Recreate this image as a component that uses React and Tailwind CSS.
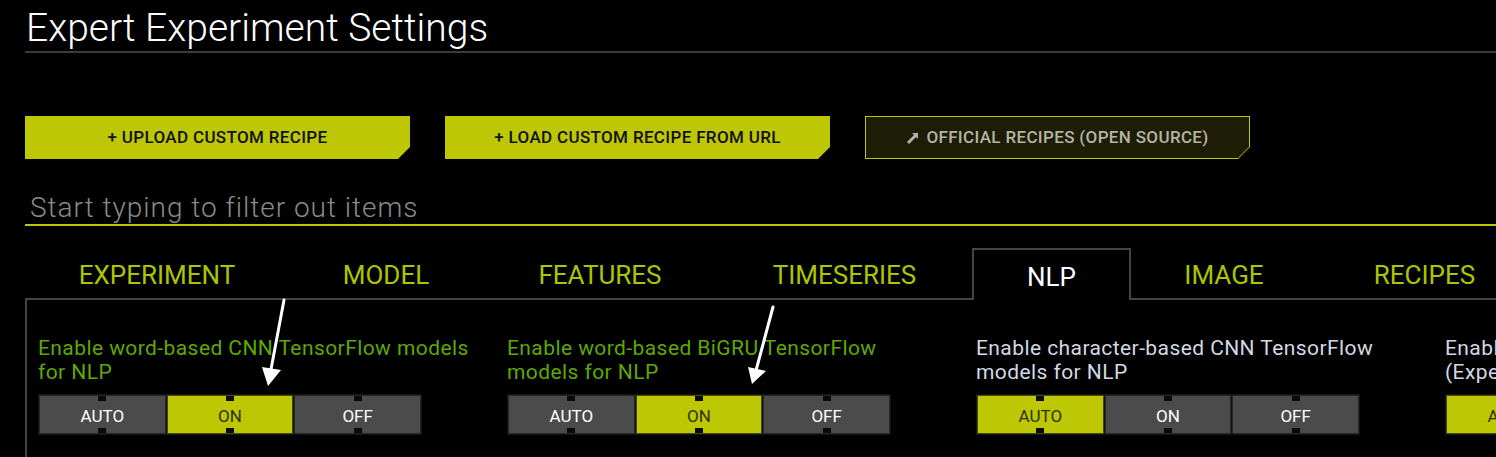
import React from 'react'

const tabs = [
  { name: 'EXPERIMENT', w: 'w-[264px]' },
  { name: 'MODEL', w: 'w-[194px]' },
  { name: 'FEATURES', w: 'w-[234px]' },
  { name: 'TIMESERIES', w: 'w-[255px]' },
  { name: 'NLP', w: 'w-[159px]', active: true },
  { name: 'IMAGE', w: 'w-[186px]' },
  { name: 'RECIPES', w: 'w-[215px]' },
]

const settings = [
  { lines: ['Enable word-based CNN TensorFlow models', 'for NLP'], value: 'ON', changed: true },
  { lines: ['Enable word-based BiGRU TensorFlow', 'models for NLP'], value: 'ON', changed: true },
  { lines: ['Enable character-based CNN TensorFlow', 'models for NLP'], value: 'AUTO' },
  { lines: ['Enable PyTorch models for NLP', '(Experimental)'], value: 'AUTO' },
]

function Toggle({ value }) {
  return (
    <div className="flex w-[384px] h-[41px] bg-[#141414] p-px gap-px">
      {['AUTO', 'ON', 'OFF'].map((o) => (
        <div
          key={o}
          className={`relative flex-1 flex items-center justify-center pt-[4px] text-[17px] border ${
            o === value
              ? 'bg-[#bdc704] text-[#2b3300] border-[#454a00]'
              : 'bg-[#4b4b4b] text-white border-[#262626]'
          }`}
        >
          <span className="absolute top-0 left-1/2 -translate-x-1/2 w-[8px] h-[5px] bg-[#0a0a0a]" />
          {o}
          <span className="absolute bottom-0 left-1/2 -translate-x-1/2 w-[8px] h-[5px] bg-[#0a0a0a]" />
        </div>
      ))}
    </div>
  )
}

function SolidButton({ children }) {
  return (
    <button className="w-[385px] h-[43px] bg-[#bdc704] text-[#111] text-[17px] font-medium tracking-[0.02em] [clip-path:polygon(0_0,100%_0,100%_calc(100%_-_12px),calc(100%_-_12px)_100%,0_100%)]">
      {children}
    </button>
  )
}

function OutlineButton({ children }) {
  return (
    <div className="w-[385px] h-[43px] bg-[#bdc704] p-px [clip-path:polygon(0_0,100%_0,100%_calc(100%_-_12px),calc(100%_-_12px)_100%,0_100%)]">
      <button className="w-full h-full bg-[#1d1d05] text-[#b4b4a6] text-[17px] font-medium tracking-[0.02em] flex items-center justify-center gap-[6px] [clip-path:polygon(0_0,100%_0,100%_calc(100%_-_11px),calc(100%_-_11px)_100%,0_100%)]">
        {children}
      </button>
    </div>
  )
}

export default function App() {
  return (
    <div className="relative w-[1496px] h-[457px] overflow-hidden bg-black font-[Roboto,sans-serif] pl-[25px]">
      <div className="h-[53px] border-b-2 border-[#3a3a3a] pt-[6px]">
        <h1 className="text-[39px] font-light leading-[44px] text-white pl-px">Expert Experiment Settings</h1>
      </div>

      <div className="flex gap-[35px] mt-[63px]">
        <SolidButton>+ UPLOAD CUSTOM RECIPE</SolidButton>
        <SolidButton>+ LOAD CUSTOM RECIPE FROM URL</SolidButton>
        <OutlineButton>
          <svg width="14" height="14" viewBox="0 0 14 14">
            <path d="M2 12 L10 4" stroke="#b4b4a6" strokeWidth="3" />
            <path d="M6 2 H12 V8 Z" fill="#b4b4a6" />
          </svg>
          OFFICIAL RECIPES (OPEN SOURCE)
        </OutlineButton>
      </div>

      <div className="mt-[29px] h-[38px] border-b-2 border-[#bdc704] pl-[5px] pt-[3px] text-[28px] font-light tracking-[0.035em] leading-[34px] text-[#8a8a8a]">
        Start typing to filter out items
      </div>

      <div className="flex mt-[22px] h-[52px]">
        {tabs.map((t) => (
          <div
            key={t.name}
            className={`${t.w} shrink-0 flex items-center justify-center pt-[4px] text-[26px] ${
              t.active
                ? 'border-2 border-b-0 border-[#444] text-white'
                : 'border-b-2 border-[#444] text-[#aec400]'
            }`}
          >
            {t.name}
          </div>
        ))}
        <div className="flex-1 border-b-2 border-[#444]" />
      </div>

      <div className="border-l-2 border-[#444] h-[160px] pl-[11px] pt-[36px] flex">
        {settings.map((s, i) => (
          <div key={i} className="w-[469px] shrink-0">
            <div
              className={`text-[21px] leading-[24px] tracking-[0.02em] ${s.changed ? 'text-[#5fa800]' : 'text-[#d2d8e4]'}`}
            >
              {s.lines[0]}
              <br />
              {s.lines[1]}
            </div>
            <div className="mt-[10px]">
              <Toggle value={s.value} />
            </div>
          </div>
        ))}
      </div>

      <svg className="absolute inset-0 pointer-events-none" width="1496" height="457">
        <g stroke="white" strokeWidth="3" fill="none" strokeLinecap="round">
          <path d="M284 300 L269 380" />
          <path d="M773 307 L754 378" />
        </g>
        <g fill="white">
          <path d="M268 386 L262 367 L281 370 Z" />
          <path d="M752 384 L748 367 L766 371 Z" />
        </g>
      </svg>
    </div>
  )
}
